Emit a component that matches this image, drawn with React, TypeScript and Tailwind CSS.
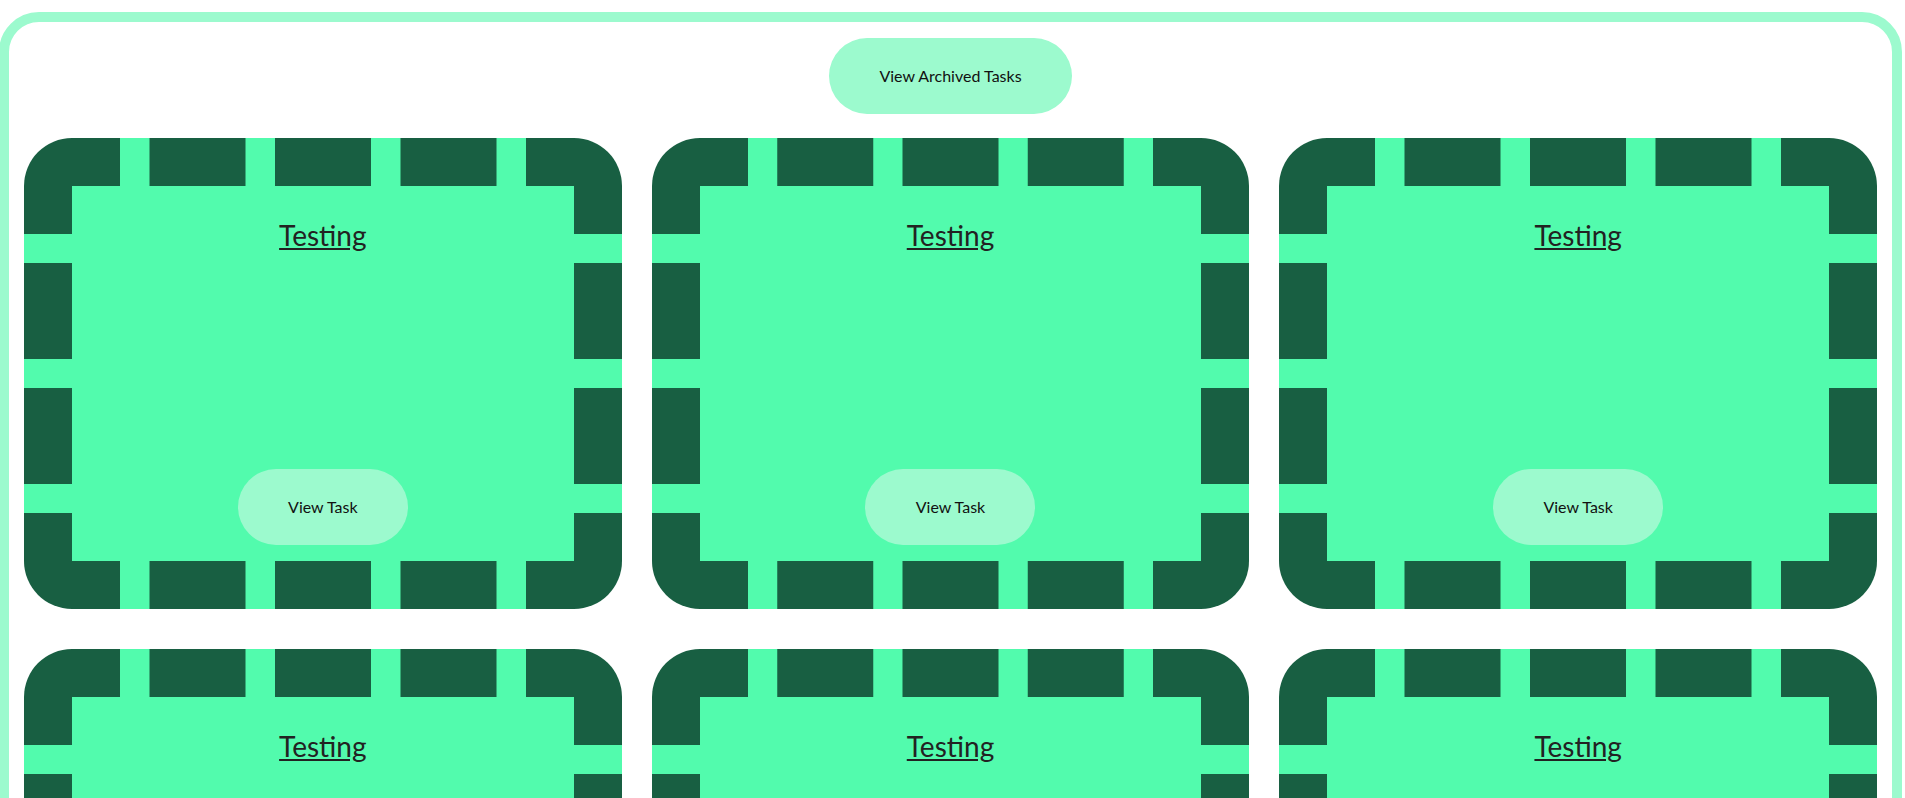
import React from "react";

const TASKS = [
  { id: 1, title: "Testing" },
  { id: 2, title: "Testing" },
  { id: 3, title: "Testing" },
  { id: 4, title: "Testing" },
  { id: 5, title: "Testing" },
  { id: 6, title: "Testing" },
];

function TaskCard({ title }: { title: string }) {
  return (
    <div className="h-[471px] rounded-[48px] border-[48px] border-dashed border-[#185f42] bg-[#52fbad]">
      <div className="flex h-full flex-col items-center justify-between pt-[33px] pb-4">
        <a href="#" className="text-[28px] leading-[1.2] text-[#222] underline">
          {title}
        </a>
        <button
          type="button"
          className="flex h-[76px] w-[170px] items-center justify-center rounded-full bg-[#9cface] text-base leading-[1.2] text-[#111]"
        >
          View Task
        </button>
      </div>
    </div>
  );
}

export default function App() {
  return (
    <div className="min-h-screen bg-white font-['Lato','Liberation_Sans',sans-serif]">
      <div className="mt-3 -ml-px w-[1903px] rounded-[40px] border-[10px] border-[#9cface] px-[15px] pt-4 pb-10">
        <div className="flex justify-center">
          <button
            type="button"
            className="flex h-[76px] items-center rounded-full bg-[#9cface] px-[50px] text-base leading-[1.2] text-[#111]"
          >
            View Archived Tasks
          </button>
        </div>

        <div className="mt-6 grid grid-cols-3 gap-x-[30px] gap-y-10">
          {TASKS.map((t) => (
            <TaskCard key={t.id} title={t.title} />
          ))}
        </div>
      </div>
    </div>
  );
}
